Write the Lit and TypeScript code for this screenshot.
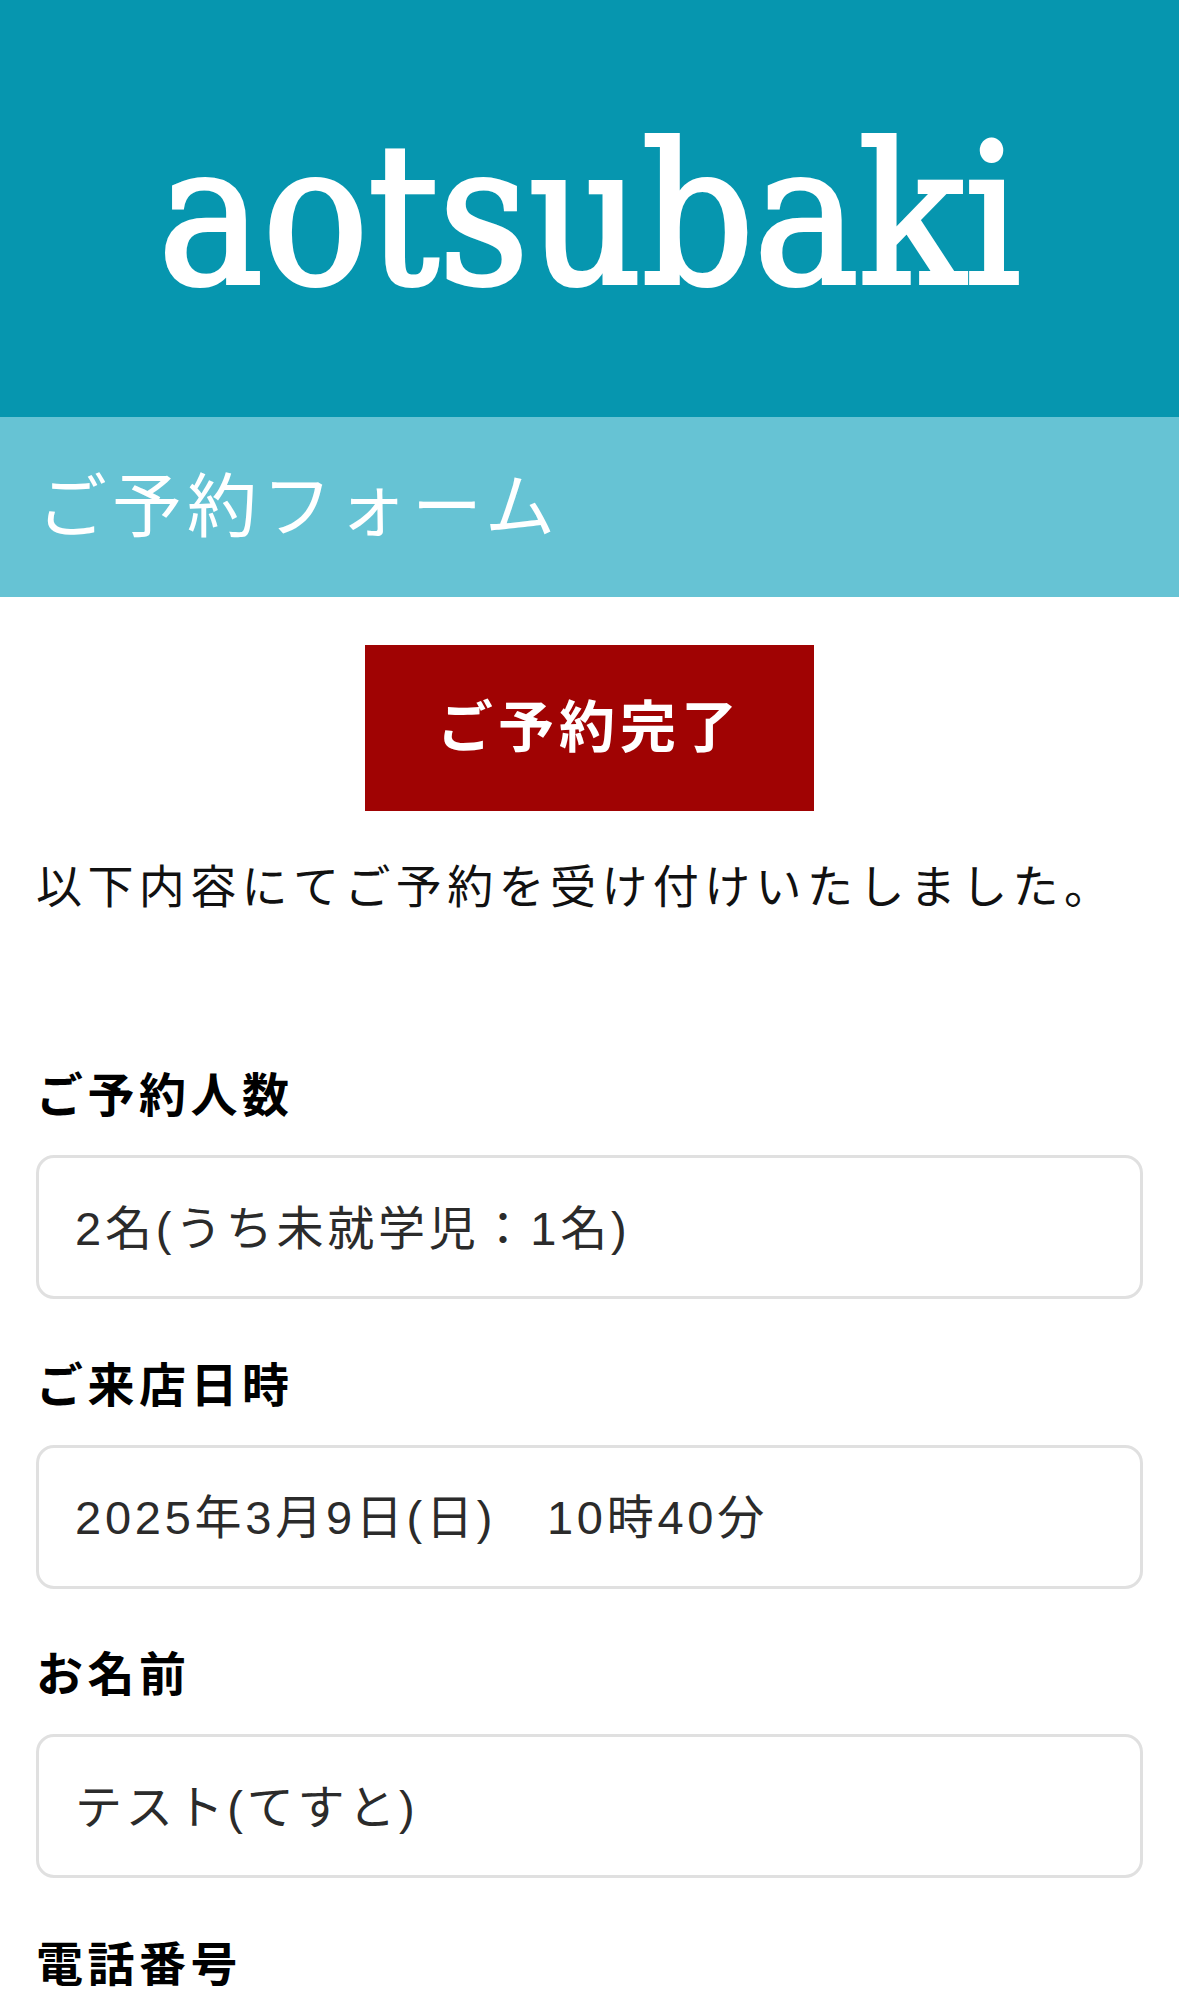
import { LitElement, html, css } from "lit";
import { customElement } from "lit/decorators.js";

const FIELDS = [
  { label: "ご予約人数", value: "2名(うち未就学児：1名)" },
  { label: "ご来店日時", value: "2025年3月9日(日)　10時40分" },
  { label: "お名前", value: "テスト(てすと)" },
];

@customElement("app-root")
export class AppRoot extends LitElement {
  static styles = css`
    :host {
      display: block;
      height: 1997px;
      overflow: hidden;
      background: #fff;
      font-family: "Liberation Sans", "Noto Sans CJK JP", sans-serif;
      color: #000;
    }
    .logo-band {
      height: 417px;
      background: #0696af;
      display: flex;
      align-items: center;
      justify-content: center;
    }
    .logo {
      font-family: "DejaVu Serif Condensed", "DejaVu Serif", serif;
      font-size: 195px;
      line-height: 1;
      letter-spacing: 0;
      color: #fff;
      -webkit-text-stroke: 4px #fff;
      padding-top: 14px;
    }
    .banner {
      box-sizing: border-box;
      height: 180px;
      background: #66c3d4;
      display: flex;
      align-items: center;
      padding: 0 0 12px 37px;
      color: #fff;
      font-size: 70px;
      font-weight: 400;
      letter-spacing: 5px;
    }
    main {
      padding: 48px 36px 0;
    }
    .done {
      box-sizing: border-box;
      width: 449px;
      height: 166px;
      margin: 0 auto;
      padding-bottom: 12px;
      background: #a00303;
      color: #fff;
      font-size: 56px;
      font-weight: 700;
      letter-spacing: 5px;
      display: flex;
      align-items: center;
      justify-content: center;
    }
    .message {
      margin: 45px 0 0;
      font-size: 46px;
      line-height: 62px;
      letter-spacing: 5.4px;
      color: #111;
    }
    .fields {
      margin-top: 148px;
      display: flex;
      flex-direction: column;
    }
    .field + .field {
      margin-top: 56.5px;
    }
    .label {
      font-size: 47px;
      font-weight: 700;
      line-height: 60px;
      letter-spacing: 4.5px;
      margin-bottom: 29px;
    }
    .value {
      box-sizing: border-box;
      height: 144px;
      border: 3px solid #e0e0e0;
      border-radius: 18px;
      padding: 0 35px 6px 36px;
      display: flex;
      align-items: center;
      font-size: 47px;
      letter-spacing: 3.75px;
      color: #2b2b2b;
    }
  `;

  render() {
    return html`
      <header class="logo-band"><div class="logo">aotsubaki</div></header>
      <div class="banner">ご予約フォーム</div>
      <main>
        <div class="done">ご予約完了</div>
        <p class="message">以下内容にてご予約を受け付けいたしました。</p>
        <div class="fields">
          ${FIELDS.map(
            (f) => html`
              <div class="field">
                <div class="label">${f.label}</div>
                <div class="value">${f.value}</div>
              </div>
            `
          )}
          <div class="field"><div class="label">電話番号</div></div>
        </div>
      </main>
    `;
  }
}
